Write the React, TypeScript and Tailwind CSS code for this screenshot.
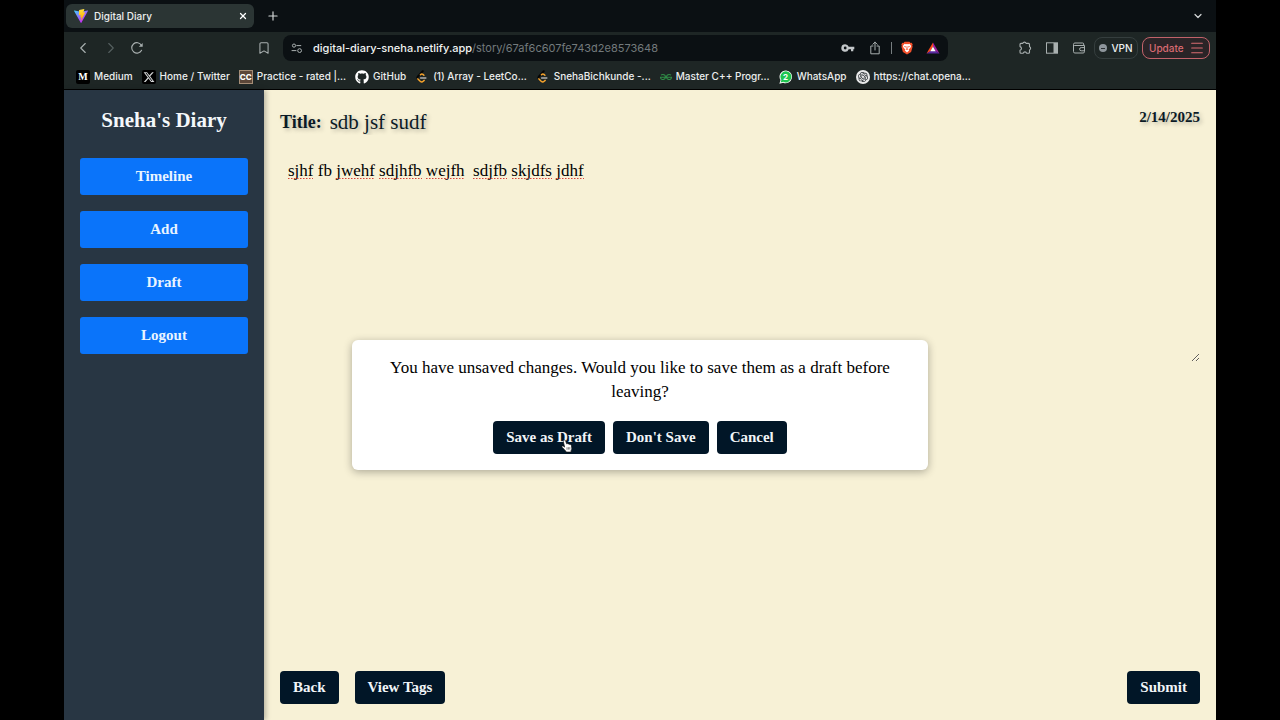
import type { ReactNode } from "react";
import {
  Bookmark,
  ChevronDown,
  ChevronLeft,
  ChevronRight,
  Menu,
  Plus,
  X,
} from "lucide-react";
import { FaGithub, FaXTwitter } from "react-icons/fa6";
import { SiGeeksforgeeks, SiOpenai } from "react-icons/si";

function ViteLogo() {
  return (
    <svg viewBox="0 0 256 257" className="size-3.5" aria-hidden="true">
      <defs>
        <linearGradient id="vite-a" x1="0" x2="0.6" y1="0" y2="0.8">
          <stop offset="0" stopColor="#41d1ff" />
          <stop offset="1" stopColor="#bd34fe" />
        </linearGradient>
        <linearGradient id="vite-b" x1="0.4" x2="0.5" y1="0" y2="0.9">
          <stop offset="0" stopColor="#ffea83" />
          <stop offset="0.1" stopColor="#ffdd35" />
          <stop offset="1" stopColor="#ffa800" />
        </linearGradient>
      </defs>
      <path fill="url(#vite-a)" d="M255.153 37.938L134.897 252.976c-2.483 4.44-8.862 4.466-11.382.048L.875 37.958c-2.746-4.814 1.371-10.646 6.827-9.67l120.385 21.517a6.537 6.537 0 0 0 2.322-.004l117.867-21.483c5.438-.991 9.574 4.796 6.877 9.62Z" />
      <path fill="url(#vite-b)" d="M185.432.063L96.44 17.501a3.268 3.268 0 0 0-2.634 3.014l-5.474 92.456a3.268 3.268 0 0 0 3.997 3.378l24.777-5.718c2.318-.535 4.413 1.507 3.936 3.838l-7.361 36.047c-.495 2.426 1.782 4.5 4.151 3.78l15.304-4.649c2.372-.72 4.652 1.36 4.15 3.788l-11.698 56.621c-.732 3.542 3.979 5.473 5.943 2.437l1.313-2.028l72.516-144.72c1.215-2.423-.88-5.186-3.54-4.672l-25.505 4.922c-2.396.462-4.435-1.77-3.759-4.114l16.646-57.705c.677-2.35-1.37-4.583-3.769-4.113Z" />
    </svg>
  );
}

function ReloadIcon() {
  return (
    <svg viewBox="0 0 14 14" className="size-3.5" fill="none" stroke="currentColor" strokeWidth="1.1" aria-hidden="true">
      <path d="M11.6 9.2A5.2 5.2 0 1 1 11.4 4.2" strokeLinecap="round" />
      <path d="M8.8 5.7h3.9V1.9Z" fill="currentColor" stroke="none" />
    </svg>
  );
}

function SiteSettingsIcon() {
  return (
    <svg viewBox="0 0 12 12" className="size-3" fill="none" stroke="currentColor" strokeWidth="1" aria-hidden="true">
      <circle cx="3" cy="3.6" r="1.6" />
      <path d="M5.8 3.6h4M1 8.6h4" strokeLinecap="round" />
      <circle cx="8.6" cy="8.6" r="1.9" />
    </svg>
  );
}

function KeyIcon() {
  return (
    <svg viewBox="0 0 14 10" className="h-2.5 w-3.5" aria-hidden="true">
      <path fill="#c3c7c9" fillRule="evenodd" d="M4.2 1.2a3.8 3.8 0 1 0 3.5 5.1H10v2h2.3v-2h1V3.8H7.7a3.8 3.8 0 0 0-3.5-2.6Zm0 2.4a1.4 1.4 0 1 1 0 2.8 1.4 1.4 0 0 1 0-2.8Z" />
    </svg>
  );
}

function ShareIcon() {
  return (
    <svg viewBox="0 0 12 14" className="h-3.5 w-3" fill="none" stroke="currentColor" strokeWidth="1" strokeLinecap="round" strokeLinejoin="round" aria-hidden="true">
      <path d="M4 5H1.8v7.8h8.4V5H8M6 9V1.2M3.8 3.3 6 1.1l2.2 2.2" />
    </svg>
  );
}

function BraveIcon() {
  return (
    <svg viewBox="0 0 14 16" className="h-3.5 w-3.5" aria-hidden="true">
      <path fill="#f2502b" d="M4.2.8h5.6l1.3 1.4 1.3-.1 1.1 1.8-.5 1.3.4 1.5-1.7 6L7 15.5l-4.7-2.8-1.7-6L1 5.2.5 3.9l1.1-1.8 1.3.1Z" />
      <path fill="#fff" d="m4.2 3.2 1.5.5L7 3.4l1.3.3 1.5-.5 1.9 2.4-.8 2.1-2 1.9.5 1.2L7 13.2l-2.4-2.4.5-1.2-2-1.9-.8-2.1Z" />
      <path fill="#f2502b" d="m3.7 5.6 2.1.6-.3 1.1-1.3-.4Zm6.6 0-2.1.6.3 1.1 1.3-.4ZM6.5 6h1v2.7l.8.6L7 10.2l-1.3-.9.8-.6Z" />
    </svg>
  );
}

function BatIcon() {
  return (
    <svg viewBox="0 0 14 13" className="h-3 w-3.5" aria-hidden="true">
      <path fill="#ff4a1c" d="M7 .5 0 12.5l4.2-2.4L7 5Z" />
      <path fill="#9e1f9c" d="M7 .5 14 12.5l-4.2-2.4L7 5Z" />
      <path fill="#5b2aa0" d="M0 12.5h14l-4.2-2.7H4.2Z" />
      <path fill="#fff" d="m7 4.8 2.9 5.2H4.1Z" />
    </svg>
  );
}

function PuzzleIcon() {
  return (
    <svg viewBox="0 0 14 14" className="size-3.5" fill="none" stroke="currentColor" strokeWidth="1.1" strokeLinejoin="round" aria-hidden="true">
      <path d="M3 2.4h1.8a1.7 1.7 0 0 1 3.3 0h2.4a1 1 0 0 1 1 1v2.3a1.7 1.7 0 0 1 0 3.2v2.3a1 1 0 0 1-1 1H8.6a1.7 1.7 0 0 0-3.3 0H3a1 1 0 0 1-1-1V9.3a1.9 1.9 0 0 0 0-3.7V3.4a1 1 0 0 1 1-1Z" />
    </svg>
  );
}

function PanelIcon() {
  return (
    <svg viewBox="0 0 13 12" className="h-3 w-3.5" aria-hidden="true">
      <rect x="1" y="0.8" width="11" height="10.4" fill="none" stroke="currentColor" />
      <rect x="8" y="1" width="4" height="10" fill="currentColor" />
    </svg>
  );
}

function WalletIcon() {
  return (
    <svg viewBox="0 0 13 12" className="h-3 w-3.5" fill="none" stroke="currentColor" strokeLinejoin="round" aria-hidden="true">
      <path d="M1 3V9.6a1.4 1.4 0 0 0 1.4 1.4H10.6a1.4 1.4 0 0 0 1.4-1.4V3.5H1.8A.9.9 0 0 1 1 2.4 1.4 1.4 0 0 1 2.4 1h7.8a1 1 0 0 1 1 1v1.3M12 5.6H8.7a1.6 1.6 0 0 0 0 3.2H12" />
    </svg>
  );
}

function LeetIcon() {
  return (
    <svg viewBox="0 0 14 14" className="size-3.5" fill="none" strokeWidth="1.5" strokeLinecap="round" strokeLinejoin="round" aria-hidden="true">
      <path d="M7.8 1.2 2.9 6.3Q1.9 7.5 2.8 8.8" stroke="#050505" strokeWidth="1.9" />
      <path d="M8.9 5.3 7.9 4.4Q6.6 3.6 5.4 4.7M2.9 8.9 5.2 11.3Q6.7 12.6 8.2 11.3L9.2 10.4" stroke="#f5a32c" />
      <path d="M5.6 8h5.2" stroke="#b3b3b3" />
    </svg>
  );
}

function WhatsAppIcon() {
  return (
    <span className="relative flex size-3.5 items-center justify-center">
      <svg viewBox="0 0 14 14" className="absolute inset-0 size-3.5" aria-hidden="true">
        <path fill="#fff" d="M7.1.4a6.4 6.4 0 0 0-5.6 9.7L.4 13.7l3.8-1A6.4 6.4 0 1 0 7.1.4Z" />
        <path fill="#1fc650" d="M7.1 1.2a5.6 5.6 0 0 0-4.7 8.7l-.8 2.6 2.7-.7a5.6 5.6 0 1 0 2.8-10.6Z" />
      </svg>
      <span className="relative text-[8px] font-bold leading-none text-white">2</span>
    </span>
  );
}

type Link = { label: string; icon: ReactNode };

const bookmarks: Link[] = [
  {
    label: "Medium",
    icon: (
      <span className="flex size-3.5 items-center justify-center rounded-xs bg-black font-['Liberation_Serif',serif] text-[10px] font-bold text-white">
        M
      </span>
    ),
  },
  {
    label: "Home / Twitter",
    icon: (
      <span className="flex size-3.5 items-center justify-center rounded-xs bg-black">
        <FaXTwitter className="size-3 text-[#d5d7d8]" />
      </span>
    ),
  },
  {
    label: "Practice - rated |...",
    icon: (
      <span className="flex size-3.5 items-center justify-center border border-[#a58d76] bg-[#5b4638] text-[8px] font-extrabold text-white">
        CC
      </span>
    ),
  },
  { label: "GitHub", icon: <FaGithub className="size-3.5 text-white" /> },
  { label: "(1) Array - LeetCo...", icon: <LeetIcon /> },
  { label: "SnehaBichkunde -...", icon: <LeetIcon /> },
  { label: "Master C++ Progr...", icon: <SiGeeksforgeeks className="size-3 text-[#2f8d46]" /> },
  { label: "WhatsApp", icon: <WhatsAppIcon /> },
  {
    label: "https://chat.opena...",
    icon: (
      <span className="flex size-3.5 items-center justify-center rounded-full bg-[#e9eaea]">
        <SiOpenai className="size-2.5 text-[#20262a]" />
      </span>
    ),
  },
];

function BrowserChrome() {
  return (
    <header className="border-b border-black bg-[#1e2625] font-['Inter',sans-serif] text-[#a9b0b0]">
      <div className="flex h-8 items-center bg-[#0b1013] pl-0.5 pr-3">
        <div className="flex h-6 w-[188px] items-center gap-1.5 rounded-md bg-[#2b3534] pl-2 pr-1">
          <ViteLogo />
          <span className="flex-1 text-[10px] font-medium text-[#eceeee]">Digital Diary</span>
          <button type="button" aria-label="Close tab" className="p-0.5 text-white">
            <X className="size-2.5" strokeWidth={3} />
          </button>
        </div>
        <button type="button" aria-label="New tab" className="ml-3 text-[#d6d9d9]">
          <Plus className="size-3.5" strokeWidth={2} />
        </button>
        <button type="button" aria-label="Search tabs" className="ml-auto text-[#d6d9d9]">
          <ChevronDown className="size-3" strokeWidth={2.4} />
        </button>
      </div>

      <div className="flex h-8 items-center pl-2.5 pr-1.5">
        <button type="button" aria-label="Back one page">
          <ChevronLeft className="size-[18px]" strokeWidth={1.5} />
        </button>
        <button type="button" aria-label="Forward one page" className="ml-2.5 text-[#566060]">
          <ChevronRight className="size-[18px]" strokeWidth={1.5} />
        </button>
        <button type="button" aria-label="Reload" className="ml-2.5">
          <ReloadIcon />
        </button>
        <button type="button" aria-label="Bookmark this page" className="ml-[113px]">
          <Bookmark className="size-3.5" strokeWidth={1.8} />
        </button>
        <div className="ml-3 flex h-[26px] w-[665px] items-center rounded-lg bg-[#0b1013] px-2">
          <SiteSettingsIcon />
          <p className="ml-2.5 flex-1 whitespace-nowrap text-[11px] text-[#737a7c]">
            <span className="font-medium text-[#f1f3f3]">digital-diary-sneha.netlify.app</span>/story/67af6c607fe743d2e8573648
          </p>
          <button type="button" aria-label="Passwords">
            <KeyIcon />
          </button>
          <button type="button" aria-label="Share" className="ml-3.5">
            <ShareIcon />
          </button>
          <span className="ml-2.5 h-3 w-px bg-[#777e80]" />
          <button type="button" aria-label="Shields" className="ml-2">
            <BraveIcon />
          </button>
          <button type="button" aria-label="Rewards" className="ml-3">
            <BatIcon />
          </button>
        </div>
        <div className="ml-auto flex items-center gap-[13px]">
          <button type="button" aria-label="Extensions">
            <PuzzleIcon />
          </button>
          <button type="button" aria-label="Side panel">
            <PanelIcon />
          </button>
          <button type="button" aria-label="Wallet">
            <WalletIcon />
          </button>
        </div>
        <button type="button" className="ml-2 flex h-[22px] w-11 items-center justify-center gap-1 rounded-lg border border-[#353e3e] text-[10px] font-medium text-[#eef0f0]">
          <span className="flex size-2 shrink-0 items-center justify-center rounded-full bg-[#8e969c]">
            <span className="h-px w-1 bg-[#2b3033]" />
          </span>
          VPN
        </button>
        <button type="button" className="ml-1 flex h-[22px] w-[68px] items-center justify-between rounded-lg border border-[#c1626a] bg-[#2a2427] pl-1.5 pr-1 text-[10px] font-medium text-[#d96b72]">
          Update
          <Menu className="size-4" strokeWidth={1.6} />
        </button>
      </div>

      <nav aria-label="Bookmarks" className="flex h-[25px] items-center gap-[9px] pl-3">
        {bookmarks.map((item) => (
          <a key={item.label} href="#" className="flex items-center gap-1 whitespace-nowrap text-[10px] font-medium text-[#eceeee]">
            {item.icon}
            {item.label}
          </a>
        ))}
      </nav>
    </header>
  );
}

function DarkButton({ children }: { children: ReactNode }) {
  return (
    <button type="button" className="h-[33px] rounded-sm bg-[#011627] px-[13px] text-[15px] font-bold text-[#f1f5f8]">
      {children}
    </button>
  );
}

const misspelled: [number, number][] = [
  [0, 25],
  [48, 87],
  [91, 134],
  [138, 177],
  [185, 219],
  [224, 264],
  [268, 296],
];

function HandPointer() {
  return (
    <svg viewBox="0 0 12 14" className="pointer-events-none absolute left-[68px] top-[18px] h-3.5 w-3" aria-hidden="true">
      <path fill="#fff" stroke="#111" strokeWidth="0.7" d="M3.1 1.2c.7-.4 1.3 0 1.5.6l1 3c.5-.4 1.2-.2 1.5.3.6-.4 1.3-.2 1.6.4.8-.3 1.6.1 1.7 1l.4 2.7c.1 1-.3 1.6-.7 2.3v1.6H5.2c-.3-1.2-1.5-2.1-2.4-3.1L1 8.2c-.6-.9.5-1.7 1.2-1.1l1.4 1L2.3 2.5c-.2-.6.2-1.1.8-1.3Z" />
      <path stroke="#333" strokeWidth="0.6" d="M6 8.3v2.4M7.4 8.2v2.4M8.8 8.1v2.4" />
    </svg>
  );
}

export default function App() {
  return (
    <div className="flex min-h-screen flex-col bg-black px-16">
      <BrowserChrome />
      <div className="relative flex flex-1 font-['Liberation_Serif',serif]">
        <aside className="relative w-[200px] shrink-0 bg-[#283643] px-4 pt-3.5 shadow-[2px_0_5px_rgba(0,0,0,0.25)]">
          <h1 className="text-center text-[21px] font-bold leading-8 text-[#f4f8fb]">Sneha's Diary</h1>
          <nav aria-label="Diary" className="mt-[22px] flex flex-col gap-4">
            {["Timeline", "Add", "Draft", "Logout"].map((label) => (
              <button key={label} type="button" className="h-[37px] rounded-[3px] bg-[#0a74fa] text-[15px] font-bold text-[#e9f4ff]">
                {label}
              </button>
            ))}
          </nav>
        </aside>

        <main className="flex flex-1 flex-col bg-[#f7f1d6] p-4 text-[#0b1a26]">
          <div className="flex items-start justify-between">
            <div className="flex flex-1 items-center gap-2">
              <label htmlFor="title" className="text-[18px] font-bold [text-shadow:2px_2px_4px_rgba(0,0,0,0.25)]">
                Title:
              </label>
              <input id="title" defaultValue="sdb jsf sudf" className="h-8 flex-1 bg-transparent text-[21px] outline-none [text-shadow:2px_2px_4px_rgba(0,0,0,0.3)]" />
            </div>
            <time dateTime="2025-02-14" className="text-[15px] font-bold leading-[22px] [text-shadow:2px_2px_4px_rgba(0,0,0,0.25)]">
              2/14/2025
            </time>
          </div>

          <div className="relative mt-[13px] text-black">
            <textarea
              aria-label="Story"
              spellCheck={false}
              defaultValue="sjhf fb jwehf sdjhfb wejfh  sdjfb skjdfs jdhf"
              className="block h-[211px] w-full resize-y bg-transparent p-2 text-[17px] leading-6 outline-none"
            />
            <svg viewBox="0 0 300 3" className="pointer-events-none absolute left-2 top-[26px] h-[3px] w-[300px]" aria-hidden="true">
              {misspelled.map(([from, to]) => (
                <path key={from} d={`M${from} 1.5H${to}`} stroke="#d8433a" strokeWidth="1.2" strokeDasharray="1.5 1.5" />
              ))}
            </svg>
          </div>

          <div className="mt-auto flex items-center gap-4">
            <DarkButton>Back</DarkButton>
            <DarkButton>View Tags</DarkButton>
            <div className="ml-auto flex">
              <DarkButton>Submit</DarkButton>
            </div>
          </div>
        </main>

        <div role="dialog" aria-label="Unsaved changes" className="absolute left-1/2 top-1/2 w-1/2 -translate-x-1/2 -translate-y-1/2 rounded-md bg-white p-4 text-center shadow-[0_2px_8px_rgba(0,0,0,0.3)]">
          <p className="px-4 text-[17px] leading-6 text-black">
            You have unsaved changes. Would you like to save them as a draft before leaving?
          </p>
          <div className="mt-[17px] flex justify-center gap-2">
            <div className="relative flex">
              <DarkButton>Save as Draft</DarkButton>
              <HandPointer />
            </div>
            <DarkButton>Don't Save</DarkButton>
            <DarkButton>Cancel</DarkButton>
          </div>
        </div>
      </div>
    </div>
  );
}
